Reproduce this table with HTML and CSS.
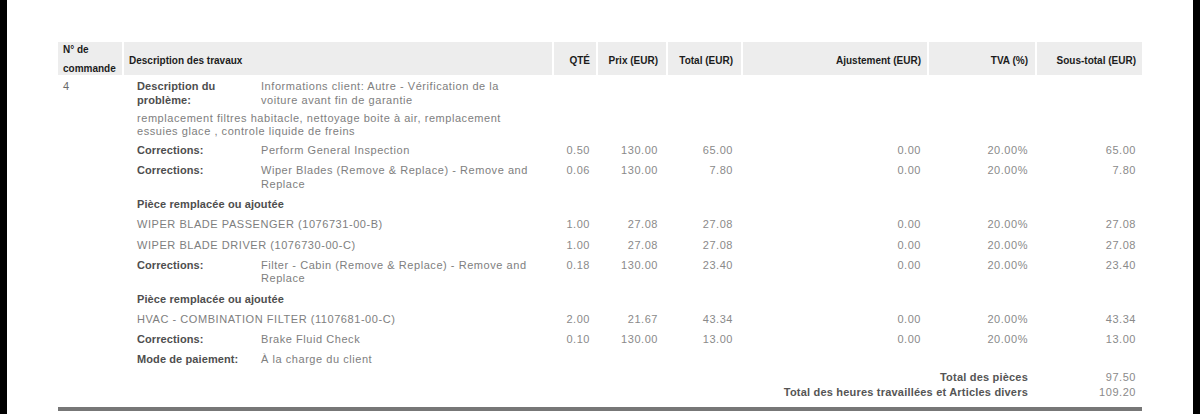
FILE: index.html
```html
<!DOCTYPE html>
<html lang="fr">
<head>
<meta charset="utf-8">
<title>Facture</title>
<link rel="stylesheet" href="styles.css">
</head>
<body>
<div class="page">
  <div class="table">
    <div class="grid thead">
      <div class="th th-order">N° de<br>commande</div>
      <div class="th th-desc">Description des travaux</div>
      <div class="th r p6">QTÉ</div>
      <div class="th r p8">Prix (EUR)</div>
      <div class="th r p8">Total (EUR)</div>
      <div class="th r p6">Ajustement (EUR)</div>
      <div class="th r p7">TVA (%)</div>
      <div class="th r p6">Sous-total (EUR)</div>
    </div>

    <div class="grid row row-first">
      <div class="order">4</div>
      <div class="desc">
        <div class="pair"><span class="lbl">Description du problème:</span><span class="val">Informations client: Autre - Vérification de la voiture avant fin de garantie</span></div>
        <p class="note">remplacement filtres habitacle, nettoyage boite à air, remplacement essuies glace , controle liquide de freins</p>
      </div>
    </div>

    <div class="grid row">
      <div class="desc"><div class="pair"><span class="lbl">Corrections:</span><span class="val">Perform General Inspection</span></div></div>
      <div class="num p6">0.50</div><div class="num p8">130.00</div><div class="num p8">65.00</div><div class="num p6">0.00</div><div class="num p7">20.00%</div><div class="num p6">65.00</div>
    </div>

    <div class="grid row">
      <div class="desc"><div class="pair"><span class="lbl">Corrections:</span><span class="val">Wiper Blades (Remove &amp; Replace) - Remove and Replace</span></div></div>
      <div class="num p6">0.06</div><div class="num p8">130.00</div><div class="num p8">7.80</div><div class="num p6">0.00</div><div class="num p7">20.00%</div><div class="num p6">7.80</div>
    </div>

    <div class="grid row">
      <div class="desc"><span class="lbl">Pièce remplacée ou ajoutée</span></div>
    </div>

    <div class="grid row">
      <div class="desc"><span class="val">WIPER BLADE PASSENGER (1076731-00-B)</span></div>
      <div class="num p6">1.00</div><div class="num p8">27.08</div><div class="num p8">27.08</div><div class="num p6">0.00</div><div class="num p7">20.00%</div><div class="num p6">27.08</div>
    </div>

    <div class="grid row">
      <div class="desc"><span class="val">WIPER BLADE DRIVER (1076730-00-C)</span></div>
      <div class="num p6">1.00</div><div class="num p8">27.08</div><div class="num p8">27.08</div><div class="num p6">0.00</div><div class="num p7">20.00%</div><div class="num p6">27.08</div>
    </div>

    <div class="grid row">
      <div class="desc"><div class="pair"><span class="lbl">Corrections:</span><span class="val">Filter - Cabin (Remove &amp; Replace) - Remove and Replace</span></div></div>
      <div class="num p6">0.18</div><div class="num p8">130.00</div><div class="num p8">23.40</div><div class="num p6">0.00</div><div class="num p7">20.00%</div><div class="num p6">23.40</div>
    </div>

    <div class="grid row">
      <div class="desc"><span class="lbl">Pièce remplacée ou ajoutée</span></div>
    </div>

    <div class="grid row">
      <div class="desc"><span class="val">HVAC - COMBINATION FILTER (1107681-00-C)</span></div>
      <div class="num p6">2.00</div><div class="num p8">21.67</div><div class="num p8">43.34</div><div class="num p6">0.00</div><div class="num p7">20.00%</div><div class="num p6">43.34</div>
    </div>

    <div class="grid row">
      <div class="desc"><div class="pair"><span class="lbl">Corrections:</span><span class="val">Brake Fluid Check</span></div></div>
      <div class="num p6">0.10</div><div class="num p8">130.00</div><div class="num p8">13.00</div><div class="num p6">0.00</div><div class="num p7">20.00%</div><div class="num p6">13.00</div>
    </div>

    <div class="grid row">
      <div class="desc"><div class="pair"><span class="lbl">Mode de paiement:</span><span class="val">À la charge du client</span></div></div>
    </div>

    <div class="totals">
      <div class="grid tot">
        <div class="tot-lbl">Total des pièces</div>
        <div class="tot-val p6">97.50</div>
      </div>
      <div class="grid tot">
        <div class="tot-lbl">Total des heures travaillées et Articles divers</div>
        <div class="tot-val p6">109.20</div>
      </div>
    </div>

    <div class="rule"></div>
  </div>
</div>
</body>
</html>
```

FILE: styles.css
```css
html, body {
  margin: 0;
  padding: 0;
  background: #000;
}

.page {
  margin: 0 7px;
  height: 414px;
  background: #fff;
  overflow: hidden;
  font-family: "Liberation Sans", Arial, sans-serif;
}

.table {
  padding: 42px 51px 0 51px;
}

.grid {
  display: grid;
  grid-template-columns: 64px 428px 42px 68px 73px 184px 106px 105px;
  column-gap: 2px;
}

.thead .th {
  background: #ededed;
  height: 33px;
  display: flex;
  align-items: center;
  box-sizing: border-box;
  padding-top: 4px;
  font-size: 10px;
  font-weight: bold;
  color: #1c1c1c;
  white-space: nowrap;
}

.thead .th-order {
  padding: 0 0 0 5px;
  line-height: 19px;
}

.thead .th-desc {
  padding-left: 5px;
}

.thead .r {
  justify-content: flex-end;
}

.p6 { padding-right: 6px; }
.p7 { padding-right: 7px; }
.p8 { padding-right: 8px; }

.row {
  padding: 3.4px 0;
  font-size: 11px;
  line-height: 13.5px;
}

.row-first {
  padding-top: 5px;
  padding-bottom: 2px;
}

.order {
  grid-column: 1;
  padding-left: 5px;
  color: #6a6a6a;
  letter-spacing: 0.4px;
}

.desc {
  grid-column: 2;
  padding: 0 17px 0 13px;
}

.pair {
  display: grid;
  grid-template-columns: 124px 1fr;
}

.lbl {
  font-weight: bold;
  color: #4e4e4e;
  letter-spacing: 0.1px;
}

.pair .lbl {
  padding-right: 6px;
}

.val {
  color: #7e7e7e;
  letter-spacing: 0.55px;
}

.note {
  margin: 4.5px 0 0;
  color: #7e7e7e;
  letter-spacing: 0.55px;
}

.num {
  text-align: right;
  color: #8a8a8a;
  letter-spacing: 0.55px;
}

.totals {
  margin-top: 0;
  font-size: 11px;
  line-height: 15px;
}

.tot-lbl {
  grid-column: 1 / 8;
  text-align: right;
  padding-right: 7px;
  font-weight: bold;
  color: #555;
  letter-spacing: 0.2px;
}

.tot-val {
  grid-column: 8;
  text-align: right;
  color: #8a8a8a;
  letter-spacing: 0.55px;
}

.rule {
  margin-top: 6.5px;
  height: 4px;
  background: #777;
}
```
